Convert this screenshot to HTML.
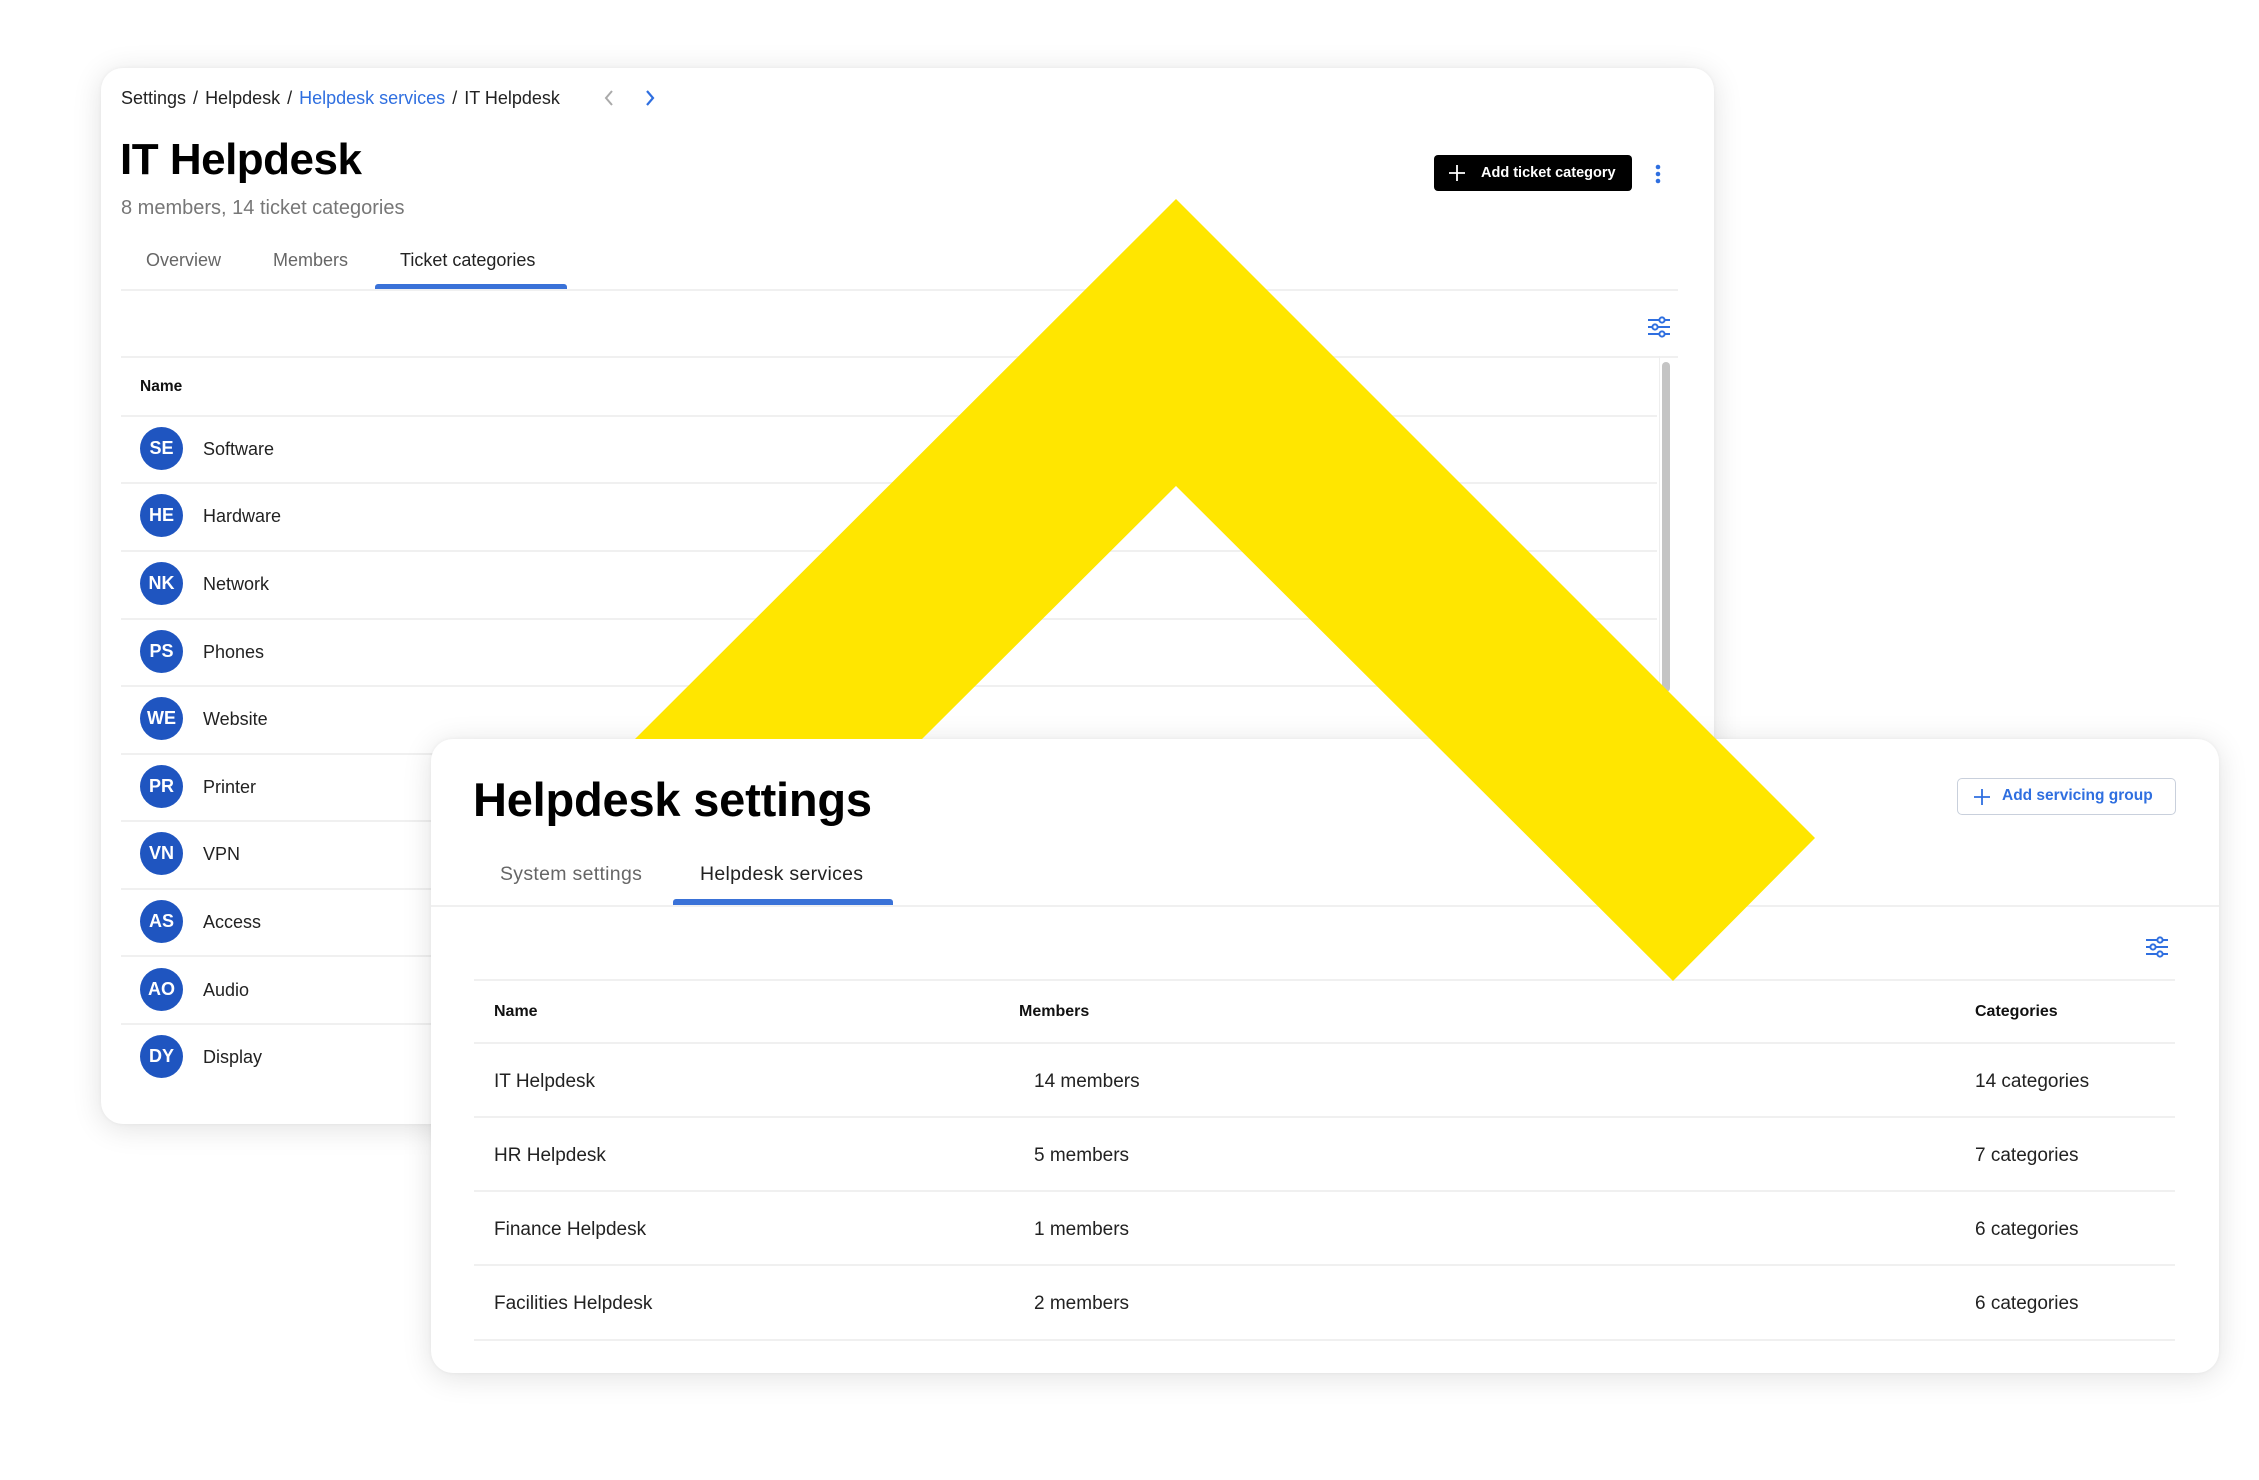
<!DOCTYPE html>
<html><head><meta charset="utf-8"><style>
*{box-sizing:border-box;margin:0;padding:0}
body{width:2259px;height:1480px;background:#fff;position:relative;overflow:hidden;font-family:"Liberation Sans",Arial,sans-serif;color:#1a1a1a}
.abs{position:absolute;white-space:nowrap}
.card{position:absolute;background:#fff;border-radius:22px;box-shadow:0 4px 30px rgba(0,0,0,0.12),0 0 4px rgba(0,0,0,0.05)}
.hl{position:absolute;height:2px;background:#f0f0f0}
.av{position:absolute;width:43px;height:43px;border-radius:50%;background:#1f55c0;color:#fff;font-weight:bold;font-size:18px;text-align:center;line-height:43px}
.rt{position:absolute;font-size:18px;color:#222}
.sl{margin:0 7px}
</style></head><body>

<!-- Card 1 -->
<div class="card" style="left:101px;top:68px;width:1613px;height:1056px;"></div>
<div class="abs" style="left:121px;top:88px;font-size:18px;color:#222">Settings<span class="sl">/</span>Helpdesk<span class="sl">/</span><span style="color:#2f6fe0">Helpdesk services</span><span class="sl">/</span>IT Helpdesk</div>
<svg class="abs" style="left:602px;top:88px" width="14" height="20"><path d="M10 3 L4 10 L10 17" stroke="#aaa" stroke-width="2" fill="none"/></svg>
<svg class="abs" style="left:643px;top:88px" width="14" height="20"><path d="M4 3 L10 10 L4 17" stroke="#2f6fe0" stroke-width="2.2" fill="none"/></svg>
<div class="abs" style="left:120px;top:135px;font-size:44px;font-weight:bold;color:#000;letter-spacing:-0.5px">IT Helpdesk</div>
<div class="abs" style="left:121px;top:197px;font-size:20px;color:#777">8 members, 14 ticket categories</div>
<div class="abs" style="left:146px;top:250px;font-size:18px;color:#666">Overview</div>
<div class="abs" style="left:273px;top:250px;font-size:18px;color:#666">Members</div>
<div class="abs" style="left:400px;top:250px;font-size:18px;color:#222">Ticket categories</div>
<div class="hl" style="left:121px;top:289px;width:1557px"></div>
<div class="abs" style="left:375px;top:284px;width:192px;height:5px;background:#3a72d8;border-radius:3px 3px 0 0"></div>
<div class="abs" style="left:1434px;top:155px;width:198px;height:36px;background:#000;border-radius:4px;color:#fff;font-size:14.5px;font-weight:bold;line-height:36px;padding-left:47px">Add ticket category</div>
<svg class="abs" style="left:1448px;top:164px" width="18" height="18"><path d="M9 1V17M1 9H17" stroke="#fff" stroke-width="1.8"/></svg>
<svg class="abs" style="left:1654px;top:163px" width="8" height="22"><circle cx="4" cy="4" r="2.3" fill="#2f6fe0"/><circle cx="4" cy="11" r="2.3" fill="#2f6fe0"/><circle cx="4" cy="18" r="2.3" fill="#2f6fe0"/></svg>
<svg class="abs" style="left:1647px;top:316px" width="24" height="22"><g stroke="#2f6fe0" stroke-width="2" fill="#fff"><path d="M1 4H23M1 11H23M1 18H23"/><circle cx="15" cy="4" r="2.6"/><circle cx="8" cy="11" r="2.6"/><circle cx="15" cy="18" r="2.6"/></g></svg>
<div class="hl" style="left:121px;top:356px;width:1557px"></div>
<div class="abs" style="left:140px;top:378px;font-size:15.5px;font-weight:bold;color:#111">Name</div>
<div class="abs" style="left:1662px;top:362px;width:8px;height:330px;background:#c4c4c4;border-radius:4px"></div>
<div class="abs" style="left:1659px;top:356px;width:1px;height:768px;background:#eee"></div>

<div class="hl" style="left:121px;top:415px;width:1536px"></div>
<div class="av" style="left:140px;top:427px">SE</div><div class="rt" style="left:203px;top:439px">Software</div>
<div class="hl" style="left:121px;top:482px;width:1536px"></div>
<div class="av" style="left:140px;top:494px">HE</div><div class="rt" style="left:203px;top:506px">Hardware</div>
<div class="hl" style="left:121px;top:550px;width:1536px"></div>
<div class="av" style="left:140px;top:562px">NK</div><div class="rt" style="left:203px;top:574px">Network</div>
<div class="hl" style="left:121px;top:618px;width:1536px"></div>
<div class="av" style="left:140px;top:630px">PS</div><div class="rt" style="left:203px;top:642px">Phones</div>
<div class="hl" style="left:121px;top:685px;width:1536px"></div>
<div class="av" style="left:140px;top:697px">WE</div><div class="rt" style="left:203px;top:709px">Website</div>
<div class="hl" style="left:121px;top:753px;width:1536px"></div>
<div class="av" style="left:140px;top:765px">PR</div><div class="rt" style="left:203px;top:777px">Printer</div>
<div class="hl" style="left:121px;top:820px;width:1536px"></div>
<div class="av" style="left:140px;top:832px">VN</div><div class="rt" style="left:203px;top:844px">VPN</div>
<div class="hl" style="left:121px;top:888px;width:1536px"></div>
<div class="av" style="left:140px;top:900px">AS</div><div class="rt" style="left:203px;top:912px">Access</div>
<div class="hl" style="left:121px;top:955px;width:1536px"></div>
<div class="av" style="left:140px;top:968px">AO</div><div class="rt" style="left:203px;top:980px">Audio</div>
<div class="hl" style="left:121px;top:1023px;width:1536px"></div>
<div class="av" style="left:140px;top:1035px">DY</div><div class="rt" style="left:203px;top:1047px">Display</div>

<!-- Card 2 -->
<div class="card" style="left:431px;top:739px;width:1788px;height:634px;"></div>
<div class="abs" style="left:473px;top:772px;font-size:47px;font-weight:bold;color:#000;letter-spacing:-0.2px">Helpdesk settings</div>
<div class="abs" style="left:1957px;top:778px;width:219px;height:37px;border:1.5px solid #c9d0dc;border-radius:5px;color:#2f6fe0;font-size:15.5px;font-weight:bold;line-height:34px;padding-left:44px">Add servicing group</div>
<svg class="abs" style="left:1973px;top:788px" width="18" height="18"><path d="M9 1V17M1 9H17" stroke="#2f6fe0" stroke-width="1.8"/></svg>
<div class="abs" style="left:500px;top:863px;font-size:19.5px;color:#666;letter-spacing:0.3px">System settings</div>
<div class="abs" style="left:700px;top:863px;font-size:19.5px;color:#222;letter-spacing:0.3px">Helpdesk services</div>
<div class="hl" style="left:431px;top:905px;width:1788px"></div>
<div class="abs" style="left:673px;top:899px;width:220px;height:6px;background:#3a72d8;border-radius:3px 3px 0 0"></div>
<svg class="abs" style="left:2145px;top:936px" width="24" height="22"><g stroke="#2f6fe0" stroke-width="2" fill="#fff"><path d="M1 4H23M1 11H23M1 18H23"/><circle cx="15" cy="4" r="2.6"/><circle cx="8" cy="11" r="2.6"/><circle cx="15" cy="18" r="2.6"/></g></svg>
<div class="hl" style="left:474px;top:979px;width:1701px"></div>
<div class="abs" style="left:494px;top:1003px;font-size:16px;font-weight:bold;color:#111">Name</div>
<div class="abs" style="left:1019px;top:1003px;font-size:16px;font-weight:bold;color:#111">Members</div>
<div class="abs" style="left:1975px;top:1003px;font-size:16px;font-weight:bold;color:#111">Categories</div>
<div class="hl" style="left:474px;top:1042px;width:1701px"></div>
<div class="rt" style="left:494px;top:1071px;font-size:19px">IT Helpdesk</div><div class="rt" style="left:1034px;top:1071px;font-size:19px">14 members</div><div class="rt" style="left:1975px;top:1071px;font-size:19px">14 categories</div>
<div class="hl" style="left:474px;top:1116px;width:1701px"></div>
<div class="rt" style="left:494px;top:1145px;font-size:19px">HR Helpdesk</div><div class="rt" style="left:1034px;top:1145px;font-size:19px">5 members</div><div class="rt" style="left:1975px;top:1145px;font-size:19px">7 categories</div>
<div class="hl" style="left:474px;top:1190px;width:1701px"></div>
<div class="rt" style="left:494px;top:1219px;font-size:19px">Finance Helpdesk</div><div class="rt" style="left:1034px;top:1219px;font-size:19px">1 members</div><div class="rt" style="left:1975px;top:1219px;font-size:19px">6 categories</div>
<div class="hl" style="left:474px;top:1264px;width:1701px"></div>
<div class="rt" style="left:494px;top:1293px;font-size:19px">Facilities Helpdesk</div><div class="rt" style="left:1034px;top:1293px;font-size:19px">2 members</div><div class="rt" style="left:1975px;top:1293px;font-size:19px">6 categories</div>
<div class="hl" style="left:474px;top:1339px;width:1701px"></div>

<!-- Yellow chevron -->
<svg class="abs" style="left:0;top:0" width="2259" height="1480"><polygon points="635,739 1176,199 1815,838 1673,981 1176,486 922,739" fill="#FFE600"/></svg>
</body></html>
